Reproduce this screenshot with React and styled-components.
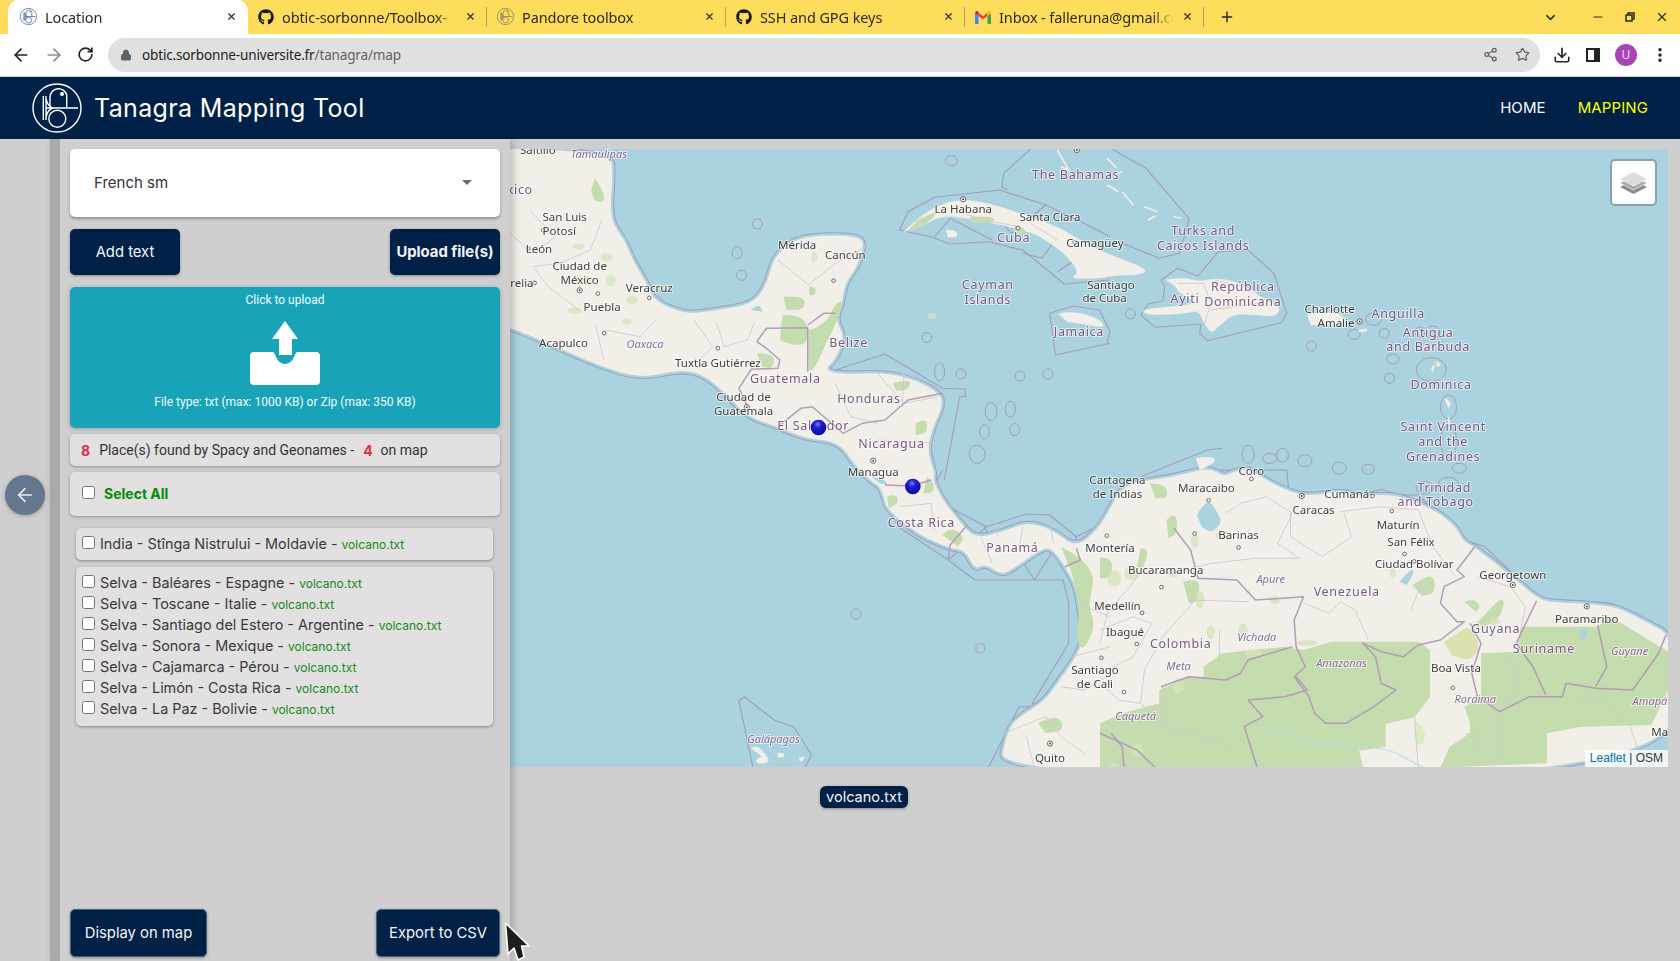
import React from "react";
import styled, { createGlobalStyle } from "styled-components";
import { ArrowLeft, ArrowRight, RotateCw, Lock, Star, Share2, Download, MoreVertical, ChevronDown, Minus, X, Plus } from "lucide-react";
import { FaGithub } from "react-icons/fa";

const SANS = `Inter, "Liberation Sans", sans-serif`;
const ROBOTO = `Roboto, "Liberation Sans", sans-serif`;
const CHROME = `"Noto Sans", "Liberation Sans", sans-serif`;
const NAVY = "#002147";

const Global = createGlobalStyle`
  html, body { margin: 0; padding: 0; height: 961px; overflow: hidden; background: #cfcfcf; }
  * { box-sizing: border-box; }
`;

const Page = styled.div`
  width: 1680px; height: 961px; display: flex; flex-direction: column;
  position: relative; overflow: hidden; font-family: ${SANS};
`;

/* ---------- browser chrome ---------- */
const TabStrip = styled.div`
  height: 34px; background: #ffdd5c; display: flex; align-items: stretch; padding-left: 8px;
  font-family: ${CHROME}; font-size: 14.5px; color: #2d2a1e;
`;
const Tab = styled.div`
  width: ${p => (p.$active ? 240 : 239)}px; display: flex; align-items: center; gap: 8px; position: relative;
  padding: 0 10px 1px ${p => (p.$active ? 12 : 10)}px;
  background: ${p => (p.$active ? "#fff" : "transparent")};
  border-radius: 10px 10px 0 0;
  ${p => !p.$active && `&::after { content: ""; position: absolute; right: 0; top: 7px; height: 20px; width: 1px; background: #b3a05a; }`}
`;
const TabTitle = styled.span`
  flex: 1; overflow: hidden; white-space: nowrap; letter-spacing: -0.1px;
  mask-image: linear-gradient(to right, #000 88%, transparent 100%);
`;
const TabClose = styled(X)`flex: none; margin-right: 1px;`;
const NewTab = styled.div`width: 46px; display: flex; align-items: center; justify-content: center;`;
const WinControls = styled.div`
  margin-left: auto; display: flex; align-items: center; gap: 18px; padding-right: 11px;
`;
const WinCollapse = styled.div`margin-right: 15px; display: flex;`;
const RestoreIcon = styled.svg`width: 14px; height: 14px;`;

const Toolbar = styled.div`
  height: 43px; background: #fff; display: flex; align-items: center; padding: 0 0 1px 11px;
  border-bottom: 1px solid #d8d8d8;
`;
const NavIcons = styled.div`display: flex; gap: 13px; align-items: center; width: 97px;`;
const Omnibox = styled.div`
  width: 1432px; height: 34px; background: #e0e0e0; border-radius: 17px; display: flex; align-items: center;
  padding: 0 10px 0 12px; font-family: ${CHROME}; font-size: 13.5px; color: #222; gap: 10px; letter-spacing: -0.15px;
`;
const UrlTail = styled.span`color: #5f6368;`;
const OmniEnd = styled.div`margin-left: auto; display: flex; gap: 17px; align-items: center; color: #5f6368;`;
const ToolEnd = styled.div`display: flex; align-items: center; gap: 14px; padding-left: 13px; color: #222;`;
const Avatar = styled.div`
  width: 22px; height: 22px; border-radius: 50%; background: #a846b5; color: #f0d8f4; font-size: 12px;
  display: flex; align-items: center; justify-content: center; font-family: ${CHROME};
`;
const PanelIcon = styled.div`
  width: 14px; height: 14px; border: 2px solid #222; border-right-width: 6px; margin: 0 1px;
`;

/* ---------- app navbar ---------- */
const Navbar = styled.header`
  height: 62px; background: ${NAVY}; display: flex; align-items: center; padding: 0 32px; color: #fff; flex: none;
`;
const Brand = styled.div`display: flex; align-items: center; gap: 12px;`;
const BrandName = styled.span`font-size: 25px; font-weight: 400; letter-spacing: 0.35px; white-space: nowrap;`;
const NavLinks = styled.nav`margin-left: auto; display: flex; gap: 32px; font-size: 15px; padding-bottom: 2px;`;
const NavLink = styled.span`color: ${p => (p.$active ? "#ffff00" : "#fff")}; letter-spacing: 0.1px;`;

/* ---------- main layout ---------- */
const Main = styled.main`flex: 1; display: flex; min-height: 0;`;
const Rail = styled.div`width: 50px; padding: 336px 0 0 5px; flex: none; background: #cfcfcf;`;
const BackButton = styled.div`
  width: 40px; height: 40px; border-radius: 50%; background: #65778f; color: #e8edf2;
  display: flex; align-items: center; justify-content: center; box-shadow: 0 1px 4px rgba(0,0,0,.25);
`;
const Sidebar = styled.aside`
  width: 460px; flex: none; background: #cfcfcf; padding: 10px 10px 4px 10px; border-left: 10px solid #a9a9a9;
  display: flex; flex-direction: column; position: relative; z-index: 2;
  box-shadow: 3px 0 8px rgba(0,0,0,.22);
`;
const SelectBox = styled.div`
  height: 68px; background: #fff; border-radius: 5px; box-shadow: 0 2px 3px rgba(0,0,0,.3);
  display: flex; align-items: center; justify-content: space-between; padding: 0 28px 2px 24px;
  font-size: 15px; color: #333; flex: none;
`;
const Caret = styled.span`
  width: 0; height: 0; border-left: 5px solid transparent; border-right: 5px solid transparent; border-top: 5px solid #6b6b6b;
`;
const ButtonRow = styled.div`
  display: flex; justify-content: space-between; margin-top: ${p => p.$top || 0}px; flex: none;
`;
const Btn = styled.button`
  width: ${p => p.$w}px; height: ${p => p.$h || 46}px; background: ${NAVY}; color: #f3f6f9; border-radius: 5px;
  border: ${p => (p.$outlined ? "1.5px solid #555f6a" : "none")};
  box-shadow: 0 1px 3px rgba(0,0,0,.35); font-family: ${SANS}; padding: 0 0 ${p => (p.$outlined ? 0 : 1)}px; white-space: nowrap;
  font-size: 14.8px; font-weight: ${p => (p.$bold ? 700 : 400)};
`;
const Dropzone = styled.div`
  height: 141px; margin-top: 12px; background: #18a3b9; border-radius: 5px; color: #f2fbfc; flex: none;
  display: flex; flex-direction: column; align-items: center; font-family: ${ROBOTO}; font-size: 12px; padding-top: 6px;
  box-shadow: 0 1px 4px rgba(0,0,0,.25);
`;
const UploadGlyph = styled.svg`width: 70px; height: 65px; margin-top: 14px; margin-bottom: 9px;`;
const CountBar = styled.div`
  height: 32px; margin-top: 6px; background: #e2e0e1; border-radius: 5px; display: flex; align-items: center; flex: none;
  padding: 0 11px; font-family: ${ROBOTO}; font-size: 14px; color: #333; box-shadow: 0 1px 3px rgba(0,0,0,.3); white-space: pre;
`;
const Num = styled.span`color: #dc2f3f; font-family: ${SANS}; font-weight: 700; font-size: 14px; margin: ${p => p.$m};`;
const AllBar = styled.label`
  height: 44px; margin-top: 6px; background: #e2e0e1; border-radius: 5px; display: flex; align-items: center; flex: none;
  padding: 0 12px 1px; box-shadow: 0 1px 3px rgba(0,0,0,.3); color: #078a07; font-weight: 700; font-size: 14px; gap: 9px;
`;
const Check = styled.input.attrs({ type: "checkbox" })`
  width: 13px; height: 13px; margin: 0; flex: none; position: relative; top: -1px;
`;
const Card = styled.div`
  margin: ${p => p.$top}px 7px 0 6px; padding: ${p => p.$pad}; background: #e2e0e1; border-radius: 5px; flex: none;
  box-shadow: 0 1px 3px rgba(0,0,0,.35);
`;
const Place = styled.label`
  height: 21px; display: flex; align-items: center; gap: 5px; font-size: 14.4px; color: #3a3a3a;
`;
const PlaceText = styled.span`white-space: pre;`;
const FileName = styled.span`color: #188a18; font-size: 12px; position: relative; top: 0;`;
const Spacer = styled.div`flex: 1;`;

const MapColumn = styled.section`flex: 1; padding-top: 10px; display: flex; flex-direction: column; background: #cfcfcf; min-width: 0;`;
const MapFrame = styled.div`width: 1158px; height: 618px; position: relative; overflow: hidden; background: #aad3df; flex: none;`;
const MapSvg = styled.svg`display: block; width: 1158px; height: 618px; filter: blur(0.35px);`;
const LayersBtn = styled.div`
  position: absolute; top: 10px; right: 11px; width: 47px; height: 47px; background: #fff; border-radius: 5px;
  border: 2px solid rgba(0,0,0,.22); background-clip: padding-box; display: flex; align-items: center; justify-content: center;
`;
const Attribution = styled.div`
  position: absolute; right: 0; bottom: 0; height: 17px; padding: 0 5px; background: rgba(255,255,255,.8);
  font-family: "Liberation Sans", sans-serif; font-size: 12px; line-height: 17px; color: #333;
`;
const LeafletLink = styled.span`color: #0078a8;`;
const Chips = styled.div`display: flex; padding: 19px 0 0 310px;`;
const Chip = styled.div`
  width: 88px; height: 22px; background: ${NAVY}; color: #f3f6f9; border-radius: 6px; font-size: 14.5px; padding-bottom: 1px;
  display: flex; align-items: center; justify-content: center; box-shadow: 0 1px 3px rgba(0,0,0,.35);
`;
const Cursor = styled.svg`position: absolute; left: 500px; top: 918px; width: 36px; height: 43px; z-index: 5;`;

/* ---------- map data ---------- */
const CROPS = {
  A: (x, y) => [510 + x / 2.613, 140 + y / 3],
  B: (x, y) => [1100 + x / 2.703, 140 + y / 3],
  C: (x, y) => [510 + x / 2.613, 470 + y / 3],
  D: (x, y) => [1100 + x / 2.703, 470 + y / 3],
  M: (x, y) => [x * 1.0714, y * 1.0714],
};
const pts = s => {
  let c = CROPS.A; const out = [];
  s.trim().split(/\s+/).forEach(t => {
    if (CROPS[t]) c = CROPS[t];
    else { const [x, y] = t.split(",").map(Number); out.push(c(x, y)); }
  });
  return out;
};
const f = n => n.toFixed(1);
const curve = (s, closed) => {
  const p = pts(s);
  if (p.length < 3) return `M${p.map(a => `${f(a[0])} ${f(a[1])}`).join("L")}`;
  let d = `M${f(p[0][0])} ${f(p[0][1])}`;
  for (let i = 1; i < p.length - 1; i++) {
    const mx = (p[i][0] + p[i + 1][0]) / 2, my = (p[i][1] + p[i + 1][1]) / 2;
    d += `Q${f(p[i][0])} ${f(p[i][1])} ${f(mx)} ${f(my)}`;
  }
  const l = p[p.length - 1];
  d += `L${f(l[0])} ${f(l[1])}`;
  return closed ? d + "Z" : d;
};
const poly = s => `M${pts(s).map(a => `${f(a[0])} ${f(a[1])}`).join("L")}Z`;
const line = s => `M${pts(s).map(a => `${f(a[0])} ${f(a[1])}`).join("L")}`;

const MAINLAND = `A -20,27 265,27 268,120 262,200 270,255 300,300 320,360 355,425 378,485 460,522 510,515 600,500 645,480 675,420 690,350 745,295 830,285 915,290 925,320 905,385 875,430 868,490 850,540 875,590 850,660 820,690 870,703 980,698 1060,720 1125,760 1130,800 1105,860 1090,930 1110,1000
 C 1105,30 1130,90 1175,155 1215,205 1290,185 1350,155 1420,180 1480,235
 D 0,170 30,110 60,50 130,30 190,22 250,5 300,-5 335,20 360,5 400,-5 440,25 520,70 580,78 650,62 700,80 780,72 840,90 885,112 925,135 965,175 980,212 1012,232 1060,272 1130,335 1190,392 1250,398 1330,402 1400,412 1470,452 1560,505 1560,920
 C 1275,920 1300,780 1330,740 1395,695 1430,640 1480,560 1500,500 1490,430 1480,350 1450,290 1420,240 1395,232 1320,292 1285,315 1240,280 1215,300 1190,240 1150,235 1120,220 1070,195 985,120 975,70 960,42
 A 950,1030 900,975 860,905 770,895 700,860 620,830 560,755 500,700 440,690 340,715 240,680 150,635 60,590 -20,555`;

const ISLANDS = [
  "A 1030,275 1065,235 1120,195 1180,178 1250,190 1320,215 1380,240 1440,265 1500,310 1568,345 B 135,390 100,405 40,405 0,415 A 1460,415 1490,400 1450,340 1400,300 1370,280 1290,255 1200,235 1130,225 1080,255",
  "A 1140,270 1165,270 1170,290 1145,292",
  "B 180,420 225,412 265,425 290,420 330,415 400,440 430,470 490,500 475,530 430,525 360,520 320,560 300,580 280,545 265,510 230,520 150,525 120,520 115,510 150,505 190,500 245,495 255,480 215,460 205,440",
  "M 988,293 1000,290 1025,297 1032,306 1015,303 996,300",
  "B 560,525 585,518 650,520 660,540 640,555 570,555",
  "B 700,570 725,565 720,575 700,575",
  "B 895,685 905,670 900,695", "B 910,665 925,672 912,680", "B 932,775 950,785 942,805", "B 942,830 948,850 940,850",
  "C 630,835 645,825 665,850 680,875 650,882 640,870 660,860",
  "C 700,850 718,848 715,862 700,862", "C 755,865 775,858 760,875",
  "B 260,955 300,948 315,965 270,990",
];
const PATCHES = [
  "A 222,115 240,145 250,185 220,185 212,150",
  "A 715,470 770,465 770,510 722,510",
  "A 712,525 775,522 780,612 738,616 705,600",
  "A 782,440 802,440 795,468 782,465",
  "A 780,570 822,558 850,490 870,480 860,530 830,600 795,690 780,690",
  "A 645,640 690,640 688,685 660,682",
  "A 1000,730 1050,715 1040,750 1010,752",
  "A 1060,850 1090,830 1090,880 1060,885",
  "A 1065,240 1100,220 1120,215 1080,260 1040,272",
  "A 1200,232 1260,225 1270,250 1210,248",
  "A 1320,255 1350,265 1340,285 1315,275",
  "C 1090,20 1110,40 1105,70 1080,70",
  "C 985,80 1010,70 1015,100 990,115",
  "C 1130,195 1150,170 1190,200 1170,230",
  "C 1440,230 1490,260 1530,320 1510,400 1530,470 1500,540 1480,520 1490,400 1465,300",
  "C 1380,760 1430,730 1450,780 1400,790",
  "D 0,262 35,262 30,325 0,325",
  "D 110,235 135,235 115,300 100,290",
  "D 135,40 175,40 185,85 150,85",
  "D 180,150 205,120 210,190 185,205",
  "D 225,335 275,320 260,400 240,400",
  "D 845,345 885,315 905,325 905,370 870,378",
  "D 985,395 1010,385 1030,410 1015,425",
  "D 1010,470 1050,420 1095,375 1085,440 1040,470",
];
const FORESTS = [
  "D 160,700 160,660 240,620 280,620 280,590 330,550 500,530 550,540 625,515 862,515 892,540 892,680 850,742 772,762 772,830 700,842 712,893 0,893 0,760 60,730",
  "D 1030,550 1125,545 1140,470 1230,470 1300,470 1345,470 1380,440 1536,545 1536,660 1490,765 1300,770 1208,790 1208,880 920,893 945,830 1000,790 1000,760 985,710 1030,680",
  "D 990,790 1070,790 1070,840 985,840",
];
const PALE = ["D 930,515 965,490 1000,465 1030,530 1000,575 950,555", "D 850,750 885,780 870,830 850,815", "D 1250,690 1280,660 1270,720 1250,740"];
const SMALL_GREENS = [
  [540,230,6,3],[548,262,7,4],[566,240,6,4],[570,262,5,6],[585,300,5,3],[615,268,6,3],[590,280,6,4],[536,290,7,3],[760,240,3,5],[870,295,4,3],
  [1115,505,4,7],[1056,535,7,7],[1142,500,8,4],[1120,560,4,9],[1100,640,6,8],[1160,590,5,9],[1190,560,5,4],[1300,535,3,5],[1395,580,5,4],[1040,540,7,8],
  [1130,590,4,7],[1170,610,9,4],[1220,600,11,3],[1040,720,7,9],[1014,745,9,7],[1062,700,6,7],[1095,535,4,4],[1340,340,2,3],
];
const WATER = [
  "D 262,135 290,80 322,135 328,160 300,190 275,170",
  "D 810,335 840,295 850,305 830,345",
  "C 945,20 975,25 990,45 965,40",
  "A 630,510 650,490 660,515",
  "D 1300,480 1320,470 1315,510 1298,505",
];
const BORDERS = [
  "A 645,605 670,565 778,563 778,695",
  "A 645,605 670,625 705,660 700,685 630,688 598,745 625,810",
  "A 778,555 820,520 850,520",
  "A 700,860 760,805 790,800 870,880 920,850 980,840 1040,780 1130,760",
  "C 980,45 1050,48 1100,30",
  "C 1145,270 1150,225 1195,165",
  "C 1450,290 1490,270 1480,235",
  "D 200,175 245,240 265,325 370,330 420,390 550,380 525,450 530,530 555,590 525,620 565,680 580,730 610,760 665,760 740,710 800,660 760,640 745,560 710,520 760,545 820,560 860,525 920,510 985,455 965,455 920,400 930,350 985,320 965,300 1012,232",
  "D 1000,460 1030,520 1005,610 1020,680 1080,725 1160,680 1250,680 1260,640 1340,655 1440,660 1510,550 1530,495",
  "D 1180,392 1125,520 1170,590 1205,675",
  "D 1345,465 1370,590 1340,650",
  "D 165,650 240,620 340,630 380,610 400,570 520,530",
  "D 400,690 500,680 560,660 530,620",
  "D 400,690 440,740 390,770 425,893",
  "D 0,790 100,840 150,893",
  "D 30,790 60,830 65,893",
];
const THIN = [
  "A 480,540 530,620 490,665", "A 540,550 560,620 620,600 640,545", "A 225,560 245,660", "A 380,540 340,590 250,570", "A 60,380 100,440 180,510", "A 240,240 210,330 130,370 60,380",
  "A 50,210 120,290 60,340 0,280", "A 780,435 700,360", "A 780,435 850,370 930,320", "A 850,730 890,830 960,850", "A 960,700 1030,790 1120,770", "A 1030,695 1025,790", "A 1130,910 960,900",
  "D 323,480 322,590", "D 300,280 200,310 110,310 20,430 0,520", "D 240,390 400,395", "D 515,130 515,200 600,260 680,200 660,130", "D 340,130 380,100 450,80 520,130 480,220 540,265 420,265 300,280",
  "D 650,125 760,110 860,120 900,230 960,320", "D 550,400 620,430 650,395 690,420 725,510", "D 870,340 840,420", "D 1020,320 1110,350 1150,410 1130,520", "D 1100,550 1130,640 1080,725", "D 1075,725 1075,880", "D 1290,680 1380,700 1430,760 1470,890",
  "D 0,640 50,690 110,700 170,770 270,800 350,830", "D 170,650 170,770", "D 0,480 90,440 140,460 90,560 20,600", "D 250,400 170,500 120,600 110,700", "D 850,740 860,893", "D 1000,760 1030,860",
  "C 1020,110 1100,100 1110,180", "C 1230,200 1260,280", "C 1270,160 1275,200", "C 1340,170 1330,240", "C 1410,160 1420,220",
  "C 1290,790 1400,740 1440,800 1500,850", "C 1350,800 1370,893", "C 1440,650 1500,660 1560,620", "C 1480,400 1568,440", "C 1470,560 1568,530",
  "B 210,430 280,430 300,490 280,560", "B 310,420 430,450", "B 300,510 430,490", "A 1170,215 1240,240 1330,260", "A 1360,250 1430,300",
];
const MARITIME = [
  "A 1018,270 1040,215 1110,172 1280,150 1400,195 1500,250 1568,290",
  "A 1018,270 1100,290 1150,312 1250,305 1340,330 1425,410 1450,433 1510,425 1568,420",
  "A 1110,290 1150,235 1260,300", "A 1250,195 1310,280 1400,195", "A 1340,340 1390,355 1430,290", "A 1430,395 1490,350",
  "A 1360,27 1290,100 1285,140 1300,150",
  "B 32,27 125,85 240,235 238,250 215,340 160,355 60,310",
  "A 1410,520 1425,645 1568,610", "A 1410,520 1470,498 1540,510 1568,575 1560,610",
  "B 175,440 165,420 210,385 265,408 320,335 400,330 470,400 505,520 490,548 290,602 270,580 272,552 150,562 110,525 130,492 170,482 175,440",
  "A 850,690 980,642 1130,745 1190,748 1190,770 1175,770 1135,1020",
  "C 1130,0 1110,45 1145,110 1245,170 1350,132 1410,135 1480,200 1568,150",
  "C 1245,170 1145,270 1215,330 1445,330 1460,400 1460,520 1365,700 1388,710 1330,710 1250,893",
  "C 1145,270 1015,170 960,50 960,20",
  "C 1240,170 1270,240", "C 1370,330 1320,240", "C 1370,330 1420,240",
  "C 1480,200 1455,310",
  "C 635,893 598,692 612,680 690,750 742,772 788,855 770,893",
  "D 0,160 40,130 130,35 260,0", "B 110,1010 290,930 330,925",
  "D 300,0 505,0 510,60 620,75 655,60 690,78 760,58 810,75 860,75 985,210 1040,230 1185,385 1330,395 1380,400 1530,490 1536,540",
];
const LOOPS = [
  [707,209,5,5],[688,236,5,6],[692,257,5,5],[888,150,6,5],[865,315,5,5],[952,351,5,5],[978,349,5,5],[925,384,6,9],[943,382,5,8],[919,403,5,7],[947,401,5,6],
  [799,573,5,5],[915,605,4.5,5],[1297,353,5,5],[1055,293,5,5],[897,349,5,5],[877,347,5,9],[912,424,8,9],[1165,424,6,9],[1185,428,7,5],[1197,425,6,7],[1218,430,7,6],[1250,437,7,6],[1277,438,6,5],
  [1224,323,5,5],[1282,298,8,6],[1264,312,6,5],[1292,311,5,5],[1337,310,8,6],[1326,310,6,5],[1300,335,6,5],[1336,345,15,12],[1352,380,8,12],[1352,412,8,16],
  [1362,437,7,5],[1352,452,10,7],[1330,455,9,6],
];
const BAHAMAS = ["B 20,55 45,85","B 60,95 50,100","B 20,135 50,155","B 60,155 90,195","B 120,200 155,215","B 130,240 150,228","B 198,230 220,235","A 1430,30 1460,90 1440,80"];

const L = [
  ["c",502,139.5,"Saltillo"],["s",559,143,"Tamaulipas"],["n",476,177,"México"],["c",527,202,"San Luis"],["c",522,215,"Potosí"],["c",503,232,"León"],["c",541,248,"Ciudad de"],["c",541,261,"México"],
  ["c",479,264,"Morelia"],["c",606,268,"Veracruz"],["c",562,286,"Puebla"],["c",526,320,"Acapulco"],["s",602,321,"Oaxaca"],["c",670,338,"Tuxtla Gutiérrez"],["n",733,353,"Guatemala"],["c",694,370,"Ciudad de"],["c",694,383,"Guatemala"],
  ["n",759,397,"El Salvador"],["n",811,372,"Honduras"],["n",792,320,"Belize"],["c",744,228,"Mérida"],["c",789,238,"Cancún"],["c",899,195,"La Habana"],["c",980,202,"Santa Clara"],["n",946,222,"Cuba"],["c",1022,226,"Camagüey"],
  ["n",1004,163,"The Bahamas"],["n",922,266,"Cayman"],["n",922,280,"Islands"],["n",1007,309,"Jamaica"],["c",1037,266,"Santiago"],["c",1031,278,"de Cuba"],["n",1123,215,"Turks and"],["n",1123,229,"Caicos Islands"],
  ["n",1160,267,"República"],["n",1160,281,"Dominicana"],["n",1106,279,"Ayiti"],["c",1241,288,"Charlotte"],["c",1247,301,"Amalie"],["n",1305,293,"Anguilla"],["n",1333,310,"Antigua"],["n",1333,323,"and Barbuda"],["n",1345,359,"Dominica"],
  ["n",1347,398,"Saint Vincent"],["n",1347,412,"and the"],["n",1347,426,"Grenadines"],["c",1168,439,"Coro"],["c",1043,448,"Cartagena"],["c",1043,461,"de Indias"],["c",1126,455,"Maracaibo"],["n",1348,455,"Trinidad"],["n",1340,468,"and Tobago"],
  ["c",1257,461,"Cumaná"],["c",1226,476,"Caracas"],["c",1305,490,"Maturín"],["c",1317,505,"San Félix"],["c",1320,526,"Ciudad Bolívar"],["c",1156,499,"Barinas"],["c",1036,511,"Montería"],["c",1088,532,"Bucaramanga"],["s",1186,540,"Apure"],
  ["n",1257,552,"Venezuela"],["c",1412,536,"Georgetown"],["c",1481,577,"Paramaribo"],["n",1396,587,"Guyana"],["n",1441,605,"Suriname"],["s",1521,607,"Guyane"],["c",1043,565,"Medellín"],["c",1050,589,"Ibagué"],["n",1102,601,"Colombia"],
  ["s",1173,594,"Vichada"],["s",1100,621,"Meta"],["s",1252,618,"Amazonas"],["c",1359,623,"Boa Vista"],["s",1377,652,"Roraima"],["s",1540,654,"Amapá"],["s",1060,668,"Caquetá"],["c",1022,625,"Santiago"],["c",1022,638,"de Cali"],
  ["n",832,414,"Nicaragua"],["c",815,440,"Managua"],["n",860,488,"Costa Rica"],["n",945,511,"Panamá"],["s",722,689,"Galápagos"],["c",980,707,"Quito"],["c",1561,683,"Macapá"],
];
const DOTS = [
  [1005,140,1],[899,186,1],[507,215,0],[493,232,0],[541,271,1],[558,274,0],[499,264,0],[606,278,0],[564,311,0],[670,325,0],[742,231,0],[778,262,0],
  [697,380,1],[815,430,1],[950,213,0],[1003,226,0],[1269,300,1],[1128,467,0],[1168,447,0],[1215,463,1],[1281,463,0],[1299,477,0],[1311,517,0],[1320,524,0],[1156,511,0],[1033,500,0],[1084,548,0],[1066,572,0],[1061,601,0],[1049,646,0],
  [1412,546,1],[1481,566,1],[1356,642,0],[980,694,1],[1028,614,0],[1115,498,0],
];

const MapLabel = styled.text`
  font-family: "Noto Sans", sans-serif; paint-order: stroke; stroke: rgba(255,255,255,.62); stroke-width: 2px; stroke-linejoin: round;
  text-anchor: middle; dominant-baseline: central;
  font-size: ${p => (p.$k === "n" ? 12.5 : p.$k === "s" ? 11 : 11.5)}px;
  letter-spacing: ${p => (p.$k === "n" ? 0.7 : 0)}px;
  font-style: ${p => (p.$k === "s" ? "italic" : "normal")};
  fill: ${p => (p.$k === "n" ? "#7a5680" : p.$k === "s" ? "#8a6a97" : "#3d3d3d")};
`;
const LandHalo = styled.path`fill: none; stroke: #a49cb8; stroke-width: 6.5px; stroke-linejoin: round;`;
const LandGap = styled.path`fill: none; stroke: #aad3df; stroke-width: 4.5px; stroke-linejoin: round;`;
const LandFill = styled.path`fill: #f2efe9;`;
const Island = styled.path`fill: #f2efe9; stroke: #f2efe9; stroke-width: .6px;`;
const Park = styled.path`fill: ${p => p.$c || "#c5dcae"};`;
const Lake = styled.path`fill: #aad3df;`;
const Greenish = styled.ellipse`fill: #d3e3bb; opacity: .8;`;
const Border = styled.path`fill: none; stroke: #b29db5; stroke-width: 1.5px; stroke-linejoin: round;`;
const ThinBorder = styled.path`fill: none; stroke: #d2c6d2; stroke-width: .9px;`;
const Maritime = styled.path`fill: none; stroke: #a49cb8; stroke-width: 1.1px; stroke-linejoin: round;`;
const Loop = styled.ellipse`fill: none; stroke: #a49cb8; stroke-width: 1px;`;
const Reef = styled.path`fill: none; stroke: #f2efe9; stroke-width: 1.6px;`;
const River = styled.path`fill: none; stroke: #b8dce6; stroke-width: 1.2px;`;
const CityDot = styled.circle`fill: #fff; stroke: #444; stroke-width: .8px;`;
const CityCore = styled.circle`fill: #444;`;

const MapArt = () => (
  <MapSvg viewBox="510 149 1158 618">
    <defs>
      <radialGradient id="ball" cx="45%" cy="30%" r="70%">
        <stop offset="0" stopColor="#7d7df0" />
        <stop offset=".35" stopColor="#1c1cd0" />
        <stop offset="1" stopColor="#0a0a9c" />
      </radialGradient>
    </defs>
    {MARITIME.map(d => <Maritime key={d} d={line(d)} />)}
    {LOOPS.map(l => <Loop key={l.join()} cx={l[0] * 1.0714} cy={l[1] * 1.0714} rx={l[2]} ry={l[3]} />)}
    <LandHalo d={curve(MAINLAND, true)} />
    <LandGap d={curve(MAINLAND, true)} />
    <LandFill d={curve(MAINLAND, true)} />
    {ISLANDS.map(d => <Island key={d} d={curve(d, true)} />)}
    {BAHAMAS.map(d => <Reef key={d} d={line(d)} />)}
    {PALE.map(d => <Park key={d} d={curve(d, true)} $c={d.startsWith("D 930") ? "#dfe0b0" : "#dcecc2"} />)}
    {FORESTS.map(d => <Park key={d} d={poly(d)} />)}
    {PATCHES.map(d => <Park key={d} d={curve(d, true)} />)}
    {SMALL_GREENS.map(g => <Greenish key={g.join()} cx={g[0] * 1.0714} cy={g[1] * 1.0714} rx={g[2]} ry={g[3]} />)}
    {WATER.map(d => <Lake key={d} d={curve(d, true)} />)}
    <River d={curve("D 430,770 600,832 770,830 850,880 880,895")} />
    {THIN.map(d => <ThinBorder key={d} d={line(d)} />)}
    {BORDERS.map(d => <Border key={d} d={line(d)} />)}
    {DOTS.map(([x, y, cap]) => (
      <g key={`${x}-${y}`}>
        <CityDot cx={x * 1.0714} cy={y * 1.0714} r={cap ? 2.6 : 1.8} />
        {cap ? <CityCore cx={x * 1.0714} cy={y * 1.0714} r={1} /> : null}
      </g>
    ))}
    {L.map(([k, x, y, t]) => <MapLabel key={`${t}${x}`} $k={k} x={x * 1.0714} y={y * 1.0714}>{t}</MapLabel>)}
    <circle cx="818.5" cy="427.5" r="7.8" fill="url(#ball)" />
    <circle cx="912.8" cy="486.5" r="7.8" fill="url(#ball)" />
  </MapSvg>
);

/* ---------- small drawings ---------- */
const LogoSvg = styled.svg`flex: none; width: ${p => p.$s}px; height: ${p => p.$s}px;`;
const Logo = ({ size, color, sw = 1.4 }) => (
  <LogoSvg $s={size} viewBox="0 0 50 50" fill="none" stroke={color} strokeWidth={sw}>
    <circle cx="25" cy="25" r="24" />
    <path d="M11.3 13V37M14 13V37M14 25H46M14 15Q15 23 21 25Q15 27 14 35M18 25V14A8.5 8.5 0 0 1 34.7 12V25" />
    <circle cx="25.3" cy="35.7" r="8.5" />
    <circle cx="30" cy="11" r="2" fill={color} stroke="none" />
  </LogoSvg>
);
const GmailIcon = () => (
  <svg width="16" height="14" viewBox="0 0 16 14">
    <path d="M0 3V13a1 1 0 0 0 1 1H3.5V6z" fill="#4285f4" />
    <path d="M16 3V13a1 1 0 0 1-1 1H12.5V6z" fill="#34a853" />
    <path d="M3.5 6V2.5L8 6.2L12.5 2.5V6L8 9.5z" fill="#ea4335" />
    <path d="M0 3a2 2 0 0 1 3.5-1.3V6z" fill="#c5221f" />
    <path d="M12.5 1.7A2 2 0 0 1 16 3L12.5 6z" fill="#fbbc04" />
  </svg>
);
const UploadIcon = () => (
  <UploadGlyph viewBox="0 0 70 65" fill="#fff">
    <path d="M35 0L48 18H42V34H29V18H22z" />
    <path d="M4 31H22C24 31 25 33 26 36Q29 43 35 43Q41 43 44 36C45 33 46 31 48 31H66A4 4 0 0 1 70 35V60A4 4 0 0 1 66 64H4A4 4 0 0 1 0 60V35A4 4 0 0 1 4 31Z" />
  </UploadGlyph>
);
const LayersIcon = () => (
  <svg width="27" height="22" viewBox="0 0 27 22">
    <path d="M13.5 8L27 15L13.5 22L0 15z" fill="#8c8c8c" />
    <path d="M13.5 4L27 11L13.5 18L0 11z" fill="#aaaaaa" stroke="#eee" strokeWidth=".7" />
    <path d="M13.5 0L27 7L13.5 14L0 7z" fill="#dcdcdc" stroke="#f4f4f4" strokeWidth=".7" />
  </svg>
);

const TABS = [
  { t: "Location", i: "logo", active: true },
  { t: "obtic-sorbonne/Toolbox-", i: "gh" },
  { t: "Pandore toolbox", i: "logo2" },
  { t: "SSH and GPG keys", i: "gh" },
  { t: "Inbox - falleruna@gmail.com", i: "gm" },
];
const tabIcon = i => {
  if (i === "logo") return <Logo size={17} color="#5570a8" sw={2.4} />;
  if (i === "logo2") return <Logo size={17} color="#8a8468" sw={2.4} />;
  if (i === "gh") return <FaGithub size={16} color="#1b1b1b" />;
  return <GmailIcon />;
};

const PLACES = [
  "Selva - Baléares - Espagne - ",
  "Selva - Toscane - Italie - ",
  "Selva - Santiago del Estero - Argentine - ",
  "Selva - Sonora - Mexique - ",
  "Selva - Cajamarca - Pérou - ",
  "Selva - Limón - Costa Rica - ",
  "Selva - La Paz - Bolivie - ",
];

export default function App() {
  return (
    <Page>
      <Global />
      <TabStrip>
        {TABS.map(tab => (
          <Tab key={tab.t} $active={tab.active}>
            {tabIcon(tab.i)}
            <TabTitle>{tab.t}</TabTitle>
            <TabClose size={11} strokeWidth={2.4} />
          </Tab>
        ))}
        <NewTab><Plus size={16} strokeWidth={2.2} /></NewTab>
        <WinControls>
          <WinCollapse><ChevronDown size={15} strokeWidth={2.4} /></WinCollapse>
          <Minus size={14} strokeWidth={2} />
          <RestoreIcon viewBox="0 0 14 14" fill="none" stroke="#2d2a1e" strokeWidth="1.5"><path d="M3 5H9V11H3zM5 5V3H11V9H9" /></RestoreIcon>
          <X size={14} strokeWidth={2} />
        </WinControls>
      </TabStrip>
      <Toolbar>
        <NavIcons>
          <ArrowLeft size={20} color="#222" />
          <ArrowRight size={20} color="#8a8a8a" />
          <RotateCw size={17} color="#222" strokeWidth={2.4} />
        </NavIcons>
        <Omnibox>
          <Lock size={12} color="#5f6368" fill="#5f6368" />
          <span>obtic.sorbonne-universite.fr<UrlTail>/tanagra/map</UrlTail></span>
          <OmniEnd>
            <Share2 size={15} />
            <Star size={15} />
          </OmniEnd>
        </Omnibox>
        <ToolEnd>
          <Download size={18} strokeWidth={2.2} />
          <PanelIcon />
          <Avatar>U</Avatar>
          <MoreVertical size={18} strokeWidth={2.6} />
        </ToolEnd>
      </Toolbar>

      <Navbar>
        <Brand>
          <Logo size={50} color="#fff" />
          <BrandName>Tanagra Mapping Tool</BrandName>
        </Brand>
        <NavLinks>
          <NavLink>HOME</NavLink>
          <NavLink $active>MAPPING</NavLink>
        </NavLinks>
      </Navbar>

      <Main>
        <Rail>
          <BackButton><ArrowLeft size={22} strokeWidth={1.8} /></BackButton>
        </Rail>
        <Sidebar>
          <SelectBox>French sm<Caret /></SelectBox>
          <ButtonRow $top={12}>
            <Btn $w={110}>Add text</Btn>
            <Btn $w={110} $bold>Upload file(s)</Btn>
          </ButtonRow>
          <Dropzone>
            Click to upload
            <UploadIcon />
            File type: txt (max: 1000 KB) or Zip (max: 350 KB)
          </Dropzone>
          <CountBar>
            <Num $m="0 9px 0 0">8</Num>Place(s) found by Spacy and Geonames -<Num $m="0 8px 0 9px">4</Num>on map
          </CountBar>
          <AllBar><Check />Select All</AllBar>
          <Card $top={12} $pad="5px 6px 6px">
            <Place><Check /><PlaceText>India - Stînga Nistrului - Moldavie - <FileName>volcano.txt</FileName></PlaceText></Place>
          </Card>
          <Card $top={7} $pad="5px 6px 7px">
            {PLACES.map(p => (
              <Place key={p}><Check /><PlaceText>{p}<FileName>volcano.txt</FileName></PlaceText></Place>
            ))}
          </Card>
          <Spacer />
          <ButtonRow>
            <Btn $w={137} $h={48} $outlined>Display on map</Btn>
            <Btn $w={124} $h={48} $outlined>Export to CSV</Btn>
          </ButtonRow>
        </Sidebar>
        <MapColumn>
          <MapFrame>
            <MapArt />
            <LayersBtn><LayersIcon /></LayersBtn>
            <Attribution><LeafletLink>Leaflet</LeafletLink> | OSM</Attribution>
          </MapFrame>
          <Chips><Chip>volcano.txt</Chip></Chips>
        </MapColumn>
      </Main>
      <Cursor viewBox="0 0 36 43">
        <path d="M5.5 5L29 28H21.6L24 39L18 42L14 30L8 36z" fill="#1d1d1d" stroke="#fff" strokeWidth="1.6" strokeLinejoin="round" />
      </Cursor>
    </Page>
  );
}
